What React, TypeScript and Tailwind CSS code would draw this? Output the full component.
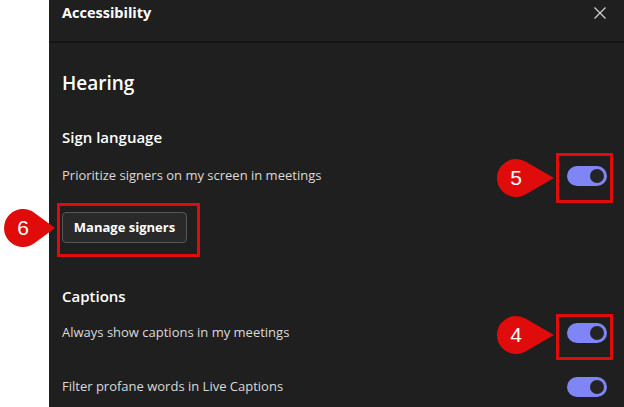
import React from 'react'

function Toggle() {
  return (
    <div className="w-[40px] h-[20px] rounded-full bg-[#7f85f5] flex items-center justify-end pr-[3px] shrink-0">
      <div className="w-[14px] h-[14px] rounded-full bg-[#242424]" />
    </div>
  )
}

function Callout({ n, x, y, short = false }: { n: string; x: number; y: number; short?: boolean }) {
  const d = short
    ? 'M52 20 L31.3 4.7 A19 19 0 1 0 31.3 35.3 Z'
    : 'M58 20 L29.5 3.55 A19 19 0 1 0 29.5 36.45 Z'
  return (
    <div className="absolute w-[60px] h-[40px]" style={{ left: x, top: y }}>
      <svg width="60" height="40" viewBox="0 0 60 40" className="absolute inset-0">
        <path d={d} fill="#e00b0b" />
      </svg>
      <span className="absolute left-0 top-0 w-[40px] h-[40px] flex items-center justify-center text-white text-[21px] font-['Liberation_Sans',Arial,sans-serif]">
        {n}
      </span>
    </div>
  )
}

function SettingRow({ label }: { label: string }) {
  return (
    <div className="flex items-center justify-between h-[20px]">
      <span className="text-[13px] text-[#dadada]">{label}</span>
      <Toggle />
    </div>
  )
}

export default function App() {
  return (
    <div className="relative w-[624px] h-[407px] bg-white flex overflow-hidden font-['Open_Sans','Noto_Sans',sans-serif]">
      {/* white strip on the left */}
      <div className="w-[49px] shrink-0 bg-white" />

      {/* Accessibility panel */}
      <div className="flex-1 bg-[#1f1f1f] flex flex-col">
        <div className="h-[41px] flex items-start justify-between pl-[13px] pr-[18px] pt-[3px]">
          <h1 className="text-[14.5px] leading-[20px] font-bold text-white">Accessibility</h1>
          <svg width="12" height="12" viewBox="0 0 12 12" className="mt-[4px]">
            <path d="M0.5 0.5 L11.5 11.5 M11.5 0.5 L0.5 11.5" stroke="#cfcfcf" strokeWidth="1.3" />
          </svg>
        </div>
        <div className="h-[2px] bg-[#151515]" />

        <div className="flex flex-col pl-[13px] pr-[17px]">
          <h2 className="mt-[26px] text-[19px] leading-[28px] font-semibold text-white">Hearing</h2>

          <h3 className="mt-[29px] text-[15px] leading-[22px] font-semibold text-white">Sign language</h3>
          <div className="mt-[18px]">
            <SettingRow label="Prioritize signers on my screen in meetings" />
          </div>
          <button className="mt-[26px] w-[125px] h-[31px] rounded-[4px] border border-[#575757] bg-[#292929] text-[13px] font-bold text-white">
            Manage signers
          </button>

          <h3 className="mt-[42px] text-[15px] leading-[22px] font-semibold text-white">Captions</h3>
          <div className="mt-[16px]">
            <SettingRow label="Always show captions in my meetings" />
          </div>
          <div className="mt-[34px]">
            <SettingRow label="Filter profane words in Live Captions" />
          </div>
        </div>
      </div>

      {/* annotations */}
      <div className="absolute left-[556px] top-[153px] w-[57px] h-[50px] border-[3px] border-[#e00b0b]" />
      <div className="absolute left-[556px] top-[314px] w-[57px] h-[46px] border-[3px] border-[#e00b0b]" />
      <div className="absolute left-[57px] top-[203px] w-[143px] h-[54px] border-[3px] border-[#e00b0b]" />
      <Callout n="5" x={496} y={158} />
      <Callout n="4" x={496} y={315} />
      <Callout n="6" x={3} y={208} short />
    </div>
  )
}
